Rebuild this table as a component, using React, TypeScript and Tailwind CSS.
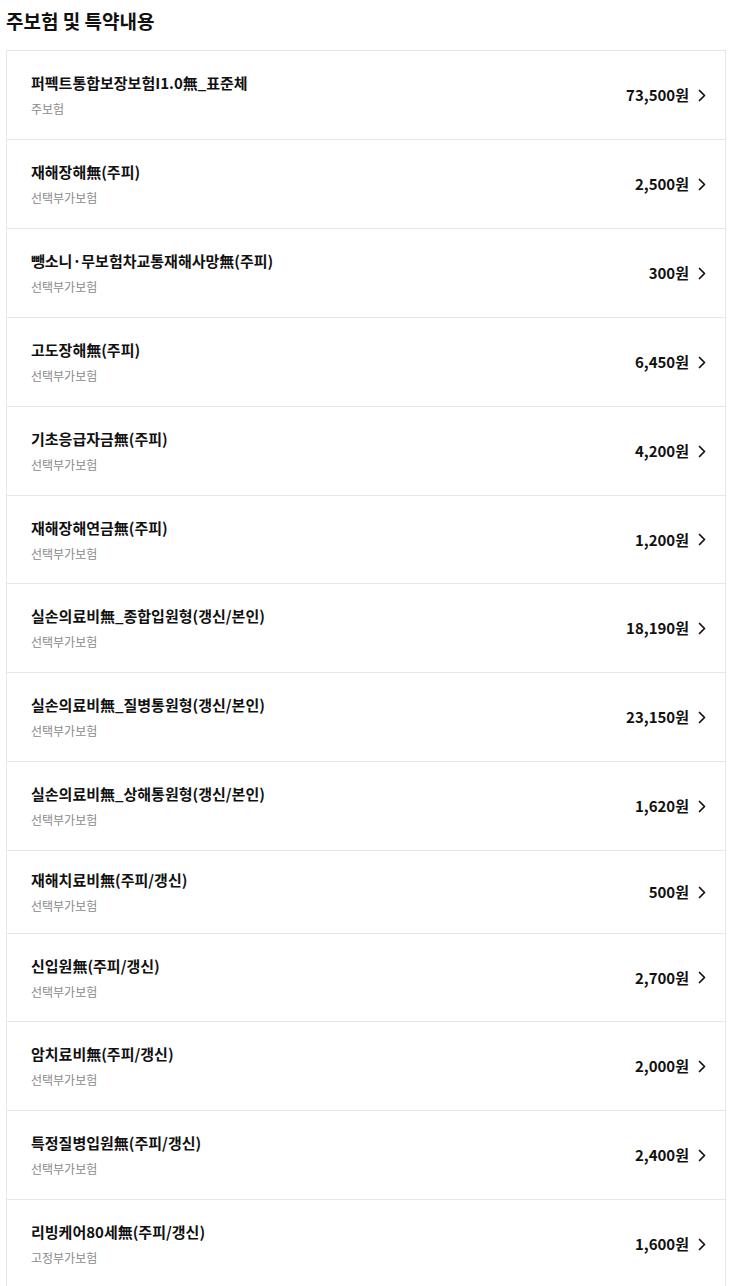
const items = [
  { name: '퍼펙트통합보장보험I1.0無_표준체', type: '주보험', price: '73,500원', h: 'h-[88px]' },
  { name: '재해장해無(주피)', type: '선택부가보험', price: '2,500원', h: 'h-[89px]' },
  { name: '뺑소니·무보험차교통재해사망無(주피)', type: '선택부가보험', price: '300원', h: 'h-[89px]' },
  { name: '고도장해無(주피)', type: '선택부가보험', price: '6,450원', h: 'h-[89px]' },
  { name: '기초응급자금無(주피)', type: '선택부가보험', price: '4,200원', h: 'h-[89px]' },
  { name: '재해장해연금無(주피)', type: '선택부가보험', price: '1,200원', h: 'h-[88px]' },
  { name: '실손의료비無_종합입원형(갱신/본인)', type: '선택부가보험', price: '18,190원', h: 'h-[89px]' },
  { name: '실손의료비無_질병통원형(갱신/본인)', type: '선택부가보험', price: '23,150원', h: 'h-[89px]' },
  { name: '실손의료비無_상해통원형(갱신/본인)', type: '선택부가보험', price: '1,620원', h: 'h-[89px]' },
  { name: '재해치료비無(주피/갱신)', type: '선택부가보험', price: '500원', h: 'h-[83px]' },
  { name: '신입원無(주피/갱신)', type: '선택부가보험', price: '2,700원', h: 'h-[88px]' },
  { name: '암치료비無(주피/갱신)', type: '선택부가보험', price: '2,000원', h: 'h-[89px]' },
  { name: '특정질병입원無(주피/갱신)', type: '선택부가보험', price: '2,400원', h: 'h-[89px]' },
  { name: '리빙케어80세無(주피/갱신)', type: '고정부가보험', price: '1,600원', h: 'h-[89px]' },
];

function Chevron() {
  return (
    <svg width="8" height="13" viewBox="0 0 8 13" fill="none" className="ml-[9px]">
      <path d="M1.5 1.5L6.5 6.5L1.5 11.5" stroke="#111" strokeWidth="1.7" strokeLinecap="round" strokeLinejoin="round" />
    </svg>
  );
}

export default function App() {
  return (
    <div
      className="min-h-screen bg-white text-[#111]"
      style={{ fontFamily: '"Noto Sans CJK KR", "Noto Sans", sans-serif' }}
    >
      <h2 className="pl-[6px] pt-[8px] pb-[16px] text-[19px] font-semibold leading-[26px] text-[#111]">
        주보험 및 특약내용
      </h2>
      <div className="ml-[6px] w-[720px] border border-[#e8e8e8]">
        {items.map((item, i) => (
          <div
            key={item.name}
            className={`flex items-center justify-between pl-[24px] pr-[19px] ${item.h} ${
              i > 0 ? 'border-t border-[#e8e8e8]' : ''
            }`}
          >
            <div className="flex flex-col">
              <p className="text-[15px] font-semibold leading-[20px]">{item.name}</p>
              <p className="mt-[8px] text-[12px] leading-[16px] text-[#8a8a8a]">{item.type}</p>
            </div>
            <div className="flex items-center">
              <span className="text-[15px] font-semibold leading-[20px]">{item.price}</span>
              <Chevron />
            </div>
          </div>
        ))}
      </div>
    </div>
  );
}
